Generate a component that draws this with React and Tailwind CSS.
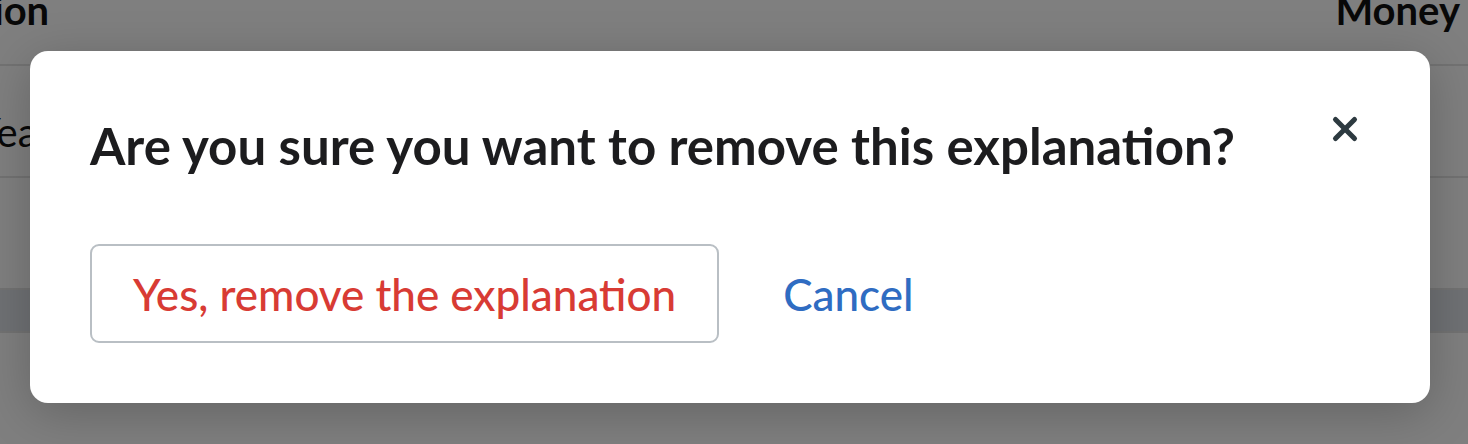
import { X } from "lucide-react";

const font = { fontFamily: "Lato, 'Noto Sans', sans-serif" };

function Table() {
  return (
    <div className="w-full bg-white text-[#111]" style={font}>
      <div className="flex h-[66px] justify-between overflow-hidden border-b-2 border-[#e4e4e4] pr-[8px]">
        <span className="-ml-[158px] -mt-[14px] text-[40px] font-bold leading-[48px]">Description</span>
        <span className="-mt-[14px] text-[40px] font-bold leading-[48px]">Money</span>
      </div>
      <div className="flex h-[112px] items-start overflow-hidden border-b-2 border-[#e4e4e4]">
        <span className="-ml-[24px] mt-[42px] text-[40px] leading-[48px]">Year</span>
      </div>
      <div className="h-[112px] border-b-2 border-[#e4e4e4]" />
      <div className="h-[43px] border-b-2 border-[#e4e4e4] bg-[#dfe2e8]" />
      <div className="h-[111px]" />
    </div>
  );
}

function ConfirmModal() {
  return (
    <div
      className="relative h-[352px] w-[1400px] rounded-[18px] bg-white pl-[60px] pt-[66px] shadow-[0_10px_50px_rgba(0,0,0,0.22)]"
      style={font}
    >
      <h2 className="text-[51px] font-bold leading-[58px] text-[#1c1c1e]">
        Are you sure you want to remove this explanation?
      </h2>
      <button
        className="absolute right-[64px] top-[57px] flex h-[42px] w-[42px] items-center justify-center text-[#2d3a40]"
        aria-label="Close"
      >
        <X size={38} strokeWidth={3.2} />
      </button>
      <div className="mt-[69px] flex items-center gap-[64px]">
        <button className="h-[99px] rounded-[9px] border-2 border-[#b9bfc4] px-[41px] text-[44px] font-medium leading-[52px] text-[#d83b34]">
          Yes, remove the explanation
        </button>
        <button className="text-[44px] font-medium leading-[52px] text-[#2f6cc2]">Cancel</button>
      </div>
    </div>
  );
}

export default function App() {
  return (
    <div className="relative h-[444px] w-[1468px] overflow-hidden">
      <Table />
      <div className="absolute inset-0 bg-black/50 pl-[30px] pt-[51px]">
        <ConfirmModal />
      </div>
    </div>
  );
}
